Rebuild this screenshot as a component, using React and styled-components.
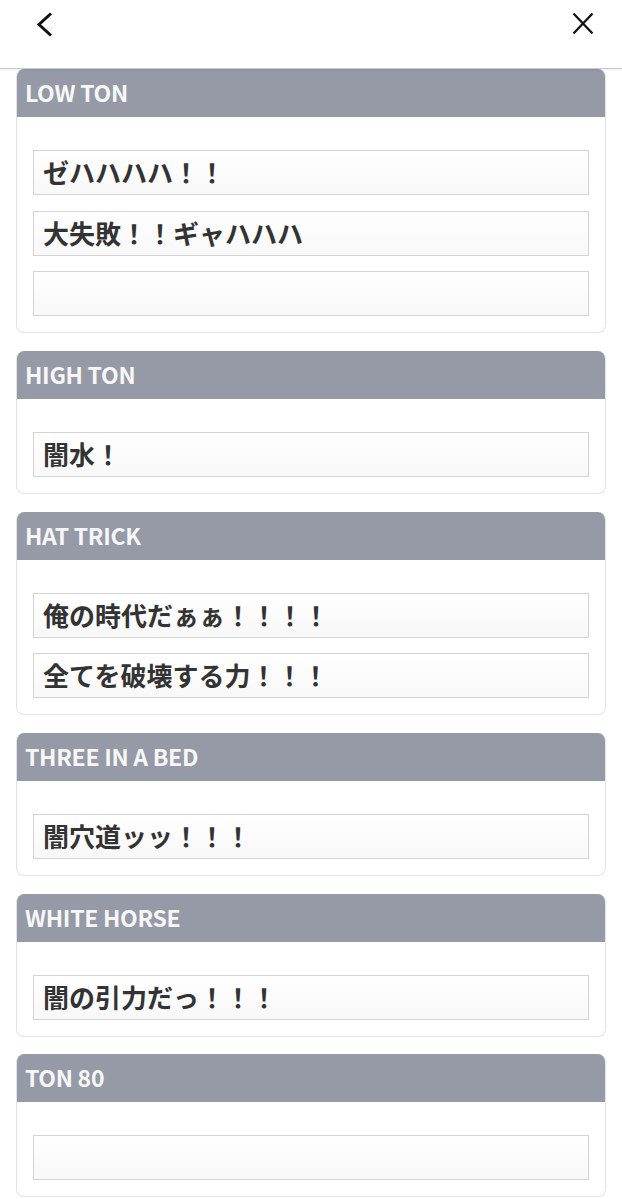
import React from 'react';
import styled, { createGlobalStyle } from 'styled-components';

const GlobalStyle = createGlobalStyle`
  html, body {
    margin: 0;
    padding: 0;
    background: #fff;
  }
  body {
    font-family: "Noto Sans CJK JP", "Noto Sans", sans-serif;
    color: #333;
  }
`;

const sections = [
  { title: 'LOW TON', lines: ['ゼハハハハ！！', '大失敗！！ギャハハハ', ''] },
  { title: 'HIGH TON', lines: ['闇水！'] },
  { title: 'HAT TRICK', lines: ['俺の時代だぁぁ！！！！', '全てを破壊する力！！！'] },
  { title: 'THREE IN A BED', lines: ['闇穴道ッッ！！！'] },
  { title: 'WHITE HORSE', lines: ['闇の引力だっ！！！'] },
  { title: 'TON 80', lines: [''] },
];

const Page = styled.div`
  width: 622px;
  min-height: 1199px;
  overflow: hidden;
`;

const TopBar = styled.header`
  height: 69px;
  display: flex;
  align-items: flex-start;
  justify-content: space-between;
  padding: 12px 27px 0 35px;
  box-sizing: border-box;
  border-bottom: 1px solid #c9cbcf;
  box-shadow: 0 1px 2px rgba(0, 0, 0, 0.08);
  position: relative;
  z-index: 1;
  background: #fff;
`;

const IconButton = styled.button`
  border: 0;
  background: none;
  padding: 0;
  display: flex;
  color: #111;
`;

const List = styled.main`
  display: flex;
  flex-direction: column;
  gap: 17.8px;
  padding: 0 16px;
`;

const Card = styled.section`
  border: 1px solid #e1e3e6;
  border-top: 0;
  border-radius: 8px;
  overflow: hidden;
  background: #fff;
`;

const CardHead = styled.h2`
  margin: 0;
  height: 48px;
  display: flex;
  align-items: center;
  padding: 0 8px 2px;
  box-sizing: border-box;
  background: #959aa6;
  color: #f7f7f8;
  font-size: 23px;
  font-weight: 700;
  letter-spacing: -0.3px;
`;

const CardBody = styled.div`
  display: flex;
  flex-direction: column;
  gap: 15.5px;
  padding: 33px 16px 16px 16px;
`;

const Field = styled.div`
  height: 45px;
  box-sizing: border-box;
  border: 1px solid #d4d4d4;
  background: linear-gradient(#ffffff, #f8f8f8);
  display: flex;
  align-items: center;
  padding: 0 9px 2px;
  font-size: 26px;
  font-weight: 700;
  color: #333;
  white-space: nowrap;
`;

const Back = () => (
  <svg width="18" height="26" viewBox="0 0 18 26" fill="none">
    <path d="M16 1.5 L4 12.5 L16 23.5" stroke="currentColor" strokeWidth="3" />
  </svg>
);

const Close = () => (
  <svg width="24" height="24" viewBox="0 0 24 24" fill="none">
    <path d="M2.5 1.5 L21.5 21.5 M21.5 1.5 L2.5 21.5" stroke="currentColor" strokeWidth="2.3" />
  </svg>
);

export default function App() {
  return (
    <Page>
      <GlobalStyle />
      <TopBar>
        <IconButton aria-label="back"><Back /></IconButton>
        <IconButton aria-label="close"><Close /></IconButton>
      </TopBar>
      <List>
        {sections.map((s) => (
          <Card key={s.title}>
            <CardHead>{s.title}</CardHead>
            <CardBody>
              {s.lines.map((line, i) => (
                <Field key={i}>{line}</Field>
              ))}
            </CardBody>
          </Card>
        ))}
      </List>
    </Page>
  );
}
